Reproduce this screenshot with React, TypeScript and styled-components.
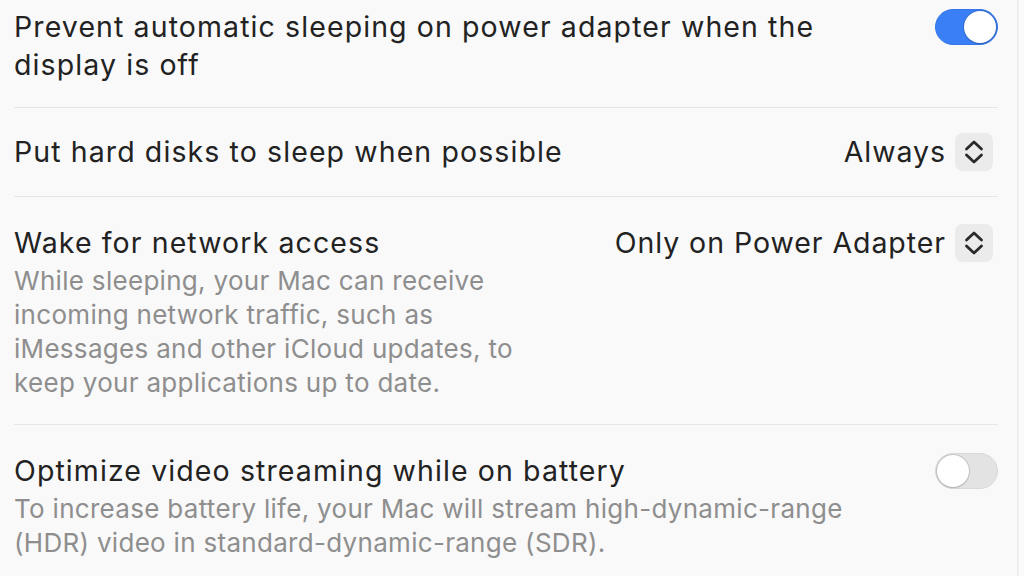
import React from "react";
import styled, { createGlobalStyle } from "styled-components";

const GlobalStyle = createGlobalStyle`
  html, body { margin: 0; padding: 0; background: #f9f9f9; }
  body { font-family: Inter, "Noto Sans", sans-serif; -webkit-font-smoothing: antialiased; }
  #root { width: 1024px; height: 576px; overflow: hidden; }
`;

const Page = styled.div`
  display: flex;
  width: 1024px;
  height: 576px;
  background: #f9f9f9;
`;

const Panel = styled.div`
  flex: 0 0 1019px;
  box-sizing: border-box;
  padding: 0 19px 0 14px;
  border-right: 2px solid #efefef;
`;

const Edge = styled.div`
  flex: 1;
  background: #fbfbfb;
`;

const Row = styled.div<{ $pt: number; $pb: number; $first?: boolean }>`
  display: flex;
  align-items: flex-start;
  gap: 20px;
  padding: ${(p) => p.$pt}px 0 ${(p) => p.$pb}px;
  border-top: ${(p) => (p.$first ? "none" : "1px solid #e6e6e6")};
`;

const Texts = styled.div<{ $max?: number }>`
  flex: 1;
  min-width: 0;
  max-width: ${(p) => (p.$max ? `${p.$max}px` : "none")};
  display: flex;
  flex-direction: column;
  gap: 2px;
`;

const Title = styled.div`
  font-size: 28.5px;
  line-height: 38px;
  color: #222222;
  letter-spacing: 1.1px;
`;

const Desc = styled.div`
  font-size: 26px;
  line-height: 34px;
  color: #8e8e8e;
  letter-spacing: 0.3px;
`;

const Control = styled.div`
  margin-left: auto;
  display: flex;
  align-items: center;
  height: 38px;
`;

const Track = styled.div<{ $on: boolean }>`
  width: 63px;
  height: 36px;
  box-sizing: border-box;
  border-radius: 18px;
  background: ${(p) => (p.$on ? "#3a7ff5" : "#e3e3e3")};
  border: 1px solid ${(p) => (p.$on ? "#3576e8" : "#d9d9d9")};
  display: flex;
  align-items: center;
  justify-content: ${(p) => (p.$on ? "flex-end" : "flex-start")};
  padding: 0 1px;
`;

const Knob = styled.div`
  width: 32px;
  height: 32px;
  border-radius: 50%;
  background: #ffffff;
  box-shadow: 0 0 0 1px rgba(0, 0, 0, 0.12), 0 1px 2px rgba(0, 0, 0, 0.12);
`;

const PopupLabel = styled.span`
  font-size: 28.5px;
  line-height: 38px;
  color: #222222;
  letter-spacing: 0.95px;
`;

const Stepper = styled.div`
  width: 38px;
  height: 38px;
  margin-left: 9px;
  margin-right: 5px;
  border-radius: 8px;
  background: #ebebeb;
  display: flex;
  align-items: center;
  justify-content: center;
`;

function Toggle({ on }: { on: boolean }) {
  return (
    <Track $on={on}>
      <Knob />
    </Track>
  );
}

function Popup({ value }: { value: string }) {
  return (
    <>
      <PopupLabel>{value}</PopupLabel>
      <Stepper>
        <svg width="20" height="26" viewBox="0 0 20 26" fill="none">
          <path d="M2.5 10 L10 3 L17.5 10" stroke="#2a2a2a" strokeWidth="2.8" strokeLinecap="round" strokeLinejoin="round" />
          <path d="M2.5 16 L10 23 L17.5 16" stroke="#2a2a2a" strokeWidth="2.8" strokeLinecap="round" strokeLinejoin="round" />
        </svg>
      </Stepper>
    </>
  );
}

export default function App() {
  return (
    <>
      <GlobalStyle />
      <Page>
        <Panel>
          <Row $first $pt={8} $pb={23}>
            <Texts $max={840}>
              <Title>Prevent automatic sleeping on power adapter when the display is off</Title>
            </Texts>
            <Control>
              <Toggle on />
            </Control>
          </Row>
          <Row $pt={25} $pb={25}>
            <Texts>
              <Title>Put hard disks to sleep when possible</Title>
            </Texts>
            <Control>
              <Popup value="Always" />
            </Control>
          </Row>
          <Row $pt={27} $pb={24}>
            <Texts $max={522}>
              <Title>Wake for network access</Title>
              <Desc>
                While sleeping, your Mac can receive incoming network traffic, such as iMessages and other iCloud
                updates, to keep your applications up to date.
              </Desc>
            </Texts>
            <Control>
              <Popup value="Only on Power Adapter" />
            </Control>
          </Row>
          <Row $pt={27} $pb={20}>
            <Texts $max={860}>
              <Title>Optimize video streaming while on battery</Title>
              <Desc>
                To increase battery life, your Mac will stream high-dynamic-range (HDR) video in
                standard-dynamic-range (SDR).
              </Desc>
            </Texts>
            <Control>
              <Toggle on={false} />
            </Control>
          </Row>
        </Panel>
        <Edge />
      </Page>
    </>
  );
}
